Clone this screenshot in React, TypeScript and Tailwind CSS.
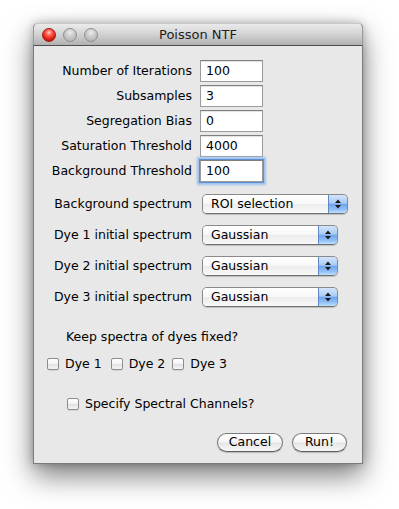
import React from "react";

const font = { fontFamily: '"DejaVu Sans", "Liberation Sans", sans-serif' };

function TextRow({ label, value, focused }: { label: string; value: string; focused?: boolean }) {
  return (
    <div className="flex items-center h-[22px]">
      <div className="w-[158px] text-right pr-0 leading-none">{label}</div>
      <div
        className={
          "ml-[8px] w-[63px] h-[22px] bg-white border border-[#9b9b9b] border-t-[#7e7e7e] flex items-center pl-[5px] leading-none " +
          (focused ? "shadow-[0_0_0_1px_#5b8fd6,0_0_2px_3px_#9cc0ec]" : "shadow-[inset_0_1px_1px_rgba(0,0,0,0.12)]")
        }
      >
        {value}
      </div>
    </div>
  );
}

function Arrows() {
  return (
    <svg width="8" height="12" viewBox="0 0 8 12">
      <path d="M4 1.5 L7 5 L1 5 Z" fill="#1a1a1a" />
      <path d="M4 10.5 L7 7 L1 7 Z" fill="#1a1a1a" />
    </svg>
  );
}

function SelectRow({ label, value, width }: { label: string; value: string; width: string }) {
  return (
    <div className="flex items-center h-[20px]">
      <div className="w-[158px] text-right leading-none">{label}</div>
      <div
        className={
          "ml-[10px] h-[20px] flex rounded-[5px] border border-[#8a8a8a] border-b-[#6f6f6f] shadow-[0_1px_1px_rgba(0,0,0,0.18)] overflow-hidden " +
          width
        }
      >
        <div className="flex-1 flex items-center pl-[8px] leading-none bg-[linear-gradient(to_bottom,#ffffff_0%,#f7f7f7_50%,#ececec_52%,#f9f9f9_100%)]">
          {value}
        </div>
        <div className="w-[19px] flex items-center justify-center border-l border-[#5d87c6] bg-[linear-gradient(to_bottom,#d3e5fb_0%,#a9cbf4_45%,#6fa5ee_52%,#8fc0f6_80%,#c2e0fc_100%)]">
          <Arrows />
        </div>
      </div>
    </div>
  );
}

function Check({ label, className }: { label: string; className?: string }) {
  return (
    <div className={"flex items-center " + (className || "")}>
      <div className="w-[12px] h-[12px] rounded-[2px] border border-[#8d8d8d] bg-[linear-gradient(to_bottom,#ffffff,#f3f3f3_50%,#e2e2e2_55%,#f5f5f5)] shadow-[0_1px_0_rgba(0,0,0,0.08)]" />
      <span className="ml-[6px] leading-none">{label}</span>
    </div>
  );
}

function Button({ label, width }: { label: string; width: string }) {
  return (
    <div
      className={
        "h-[19px] rounded-full border border-[#7a7a7a] border-b-[#5e5e5e] flex items-center justify-center leading-none shadow-[0_1px_1px_rgba(0,0,0,0.2)] bg-[linear-gradient(to_bottom,#ffffff_0%,#f6f6f6_45%,#e6e6e6_55%,#f7f7f7_100%)] " +
        width
      }
    >
      {label}
    </div>
  );
}

export default function App() {
  return (
    <div className="w-[399px] h-[509px] bg-white pt-[23px] pl-[33px] text-[12.5px] text-black" style={font}>
      <div className="w-[330px] h-[441px] bg-[#e8e8e8] border-x border-b border-[#7b7b7b] rounded-t-[5px] shadow-[0_12px_28px_rgba(0,0,0,0.5),0_0_10px_rgba(0,0,0,0.25)] flex flex-col">
        <div className="h-[23px] rounded-t-[5px] border-b border-[#4f4f4f] bg-[linear-gradient(to_bottom,#ebebeb,#d2d2d2_50%,#b1b1b1)] grid grid-cols-[1fr_auto_1fr] items-center -mx-px border-x border-t border-x-[#9a9a9a] border-t-[#c8c8c8]">
          <div className="flex items-center gap-[7px] pl-[8px]">
            <div className="w-[14px] h-[14px] rounded-full border border-[#9c1c14] bg-[radial-gradient(circle_at_50%_30%,#ffd0c8_0%,#ff5b4d_30%,#d8150b_70%,#b10c04_100%)]" />
            <div className="w-[14px] h-[14px] rounded-full border border-[#8e8e8e] bg-[radial-gradient(circle_at_50%_30%,#ececec_0%,#c9c9c9_45%,#adadad_100%)]" />
            <div className="w-[14px] h-[14px] rounded-full border border-[#8e8e8e] bg-[radial-gradient(circle_at_50%_30%,#ececec_0%,#c9c9c9_45%,#adadad_100%)]" />
          </div>
          <div className="text-[13px] text-[#1e1e1e] leading-none">Poisson NTF</div>
          <div />
        </div>

        <div className="flex flex-col pt-[14px]">
          <div className="flex flex-col gap-[3px]">
            <TextRow label="Number of Iterations" value="100" />
            <TextRow label="Subsamples" value="3" />
            <TextRow label="Segregation Bias" value="0" />
            <TextRow label="Saturation Threshold" value="4000" />
            <TextRow label="Background Threshold" value="100" focused />
          </div>

          <div className="flex flex-col gap-[11px] mt-[12px]">
            <SelectRow label="Background spectrum" value="ROI selection" width="w-[146px]" />
            <SelectRow label="Dye 1 initial spectrum" value="Gaussian" width="w-[136px]" />
            <SelectRow label="Dye 2 initial spectrum" value="Gaussian" width="w-[136px]" />
            <SelectRow label="Dye 3 initial spectrum" value="Gaussian" width="w-[136px]" />
          </div>

          <div className="mt-[22px] pl-[32px] h-[16px] flex items-center">Keep spectra of dyes fixed?</div>

          <div className="mt-[11px] h-[16px] flex items-center pl-[13px]">
            <Check label="Dye 1" />
            <Check label="Dye 2" className="ml-[9px]" />
            <Check label="Dye 3" className="ml-[7px]" />
          </div>

          <div className="mt-[24px] h-[16px] flex items-center pl-[33px]">
            <Check label="Specify Spectral Channels?" />
          </div>

          <div className="mt-[21px] flex justify-end gap-[9px] pr-[15px]">
            <Button label="Cancel" width="w-[66px]" />
            <Button label="Run!" width="w-[55px]" />
          </div>
        </div>
      </div>
    </div>
  );
}
